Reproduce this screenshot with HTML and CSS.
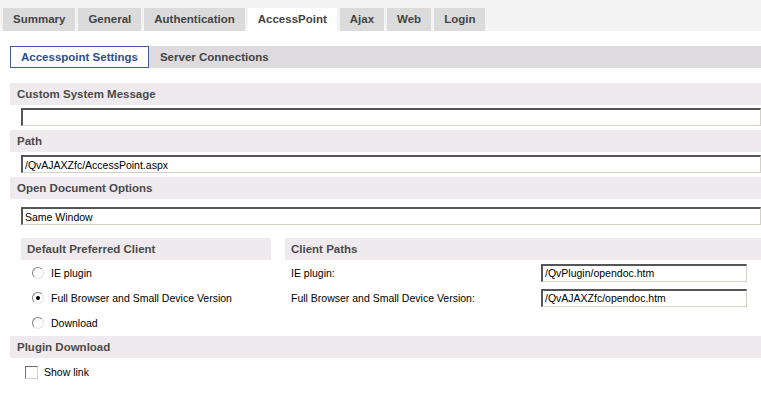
FILE: index.html
```html
<!DOCTYPE html>
<html lang="en">
<head>
    <meta charset="UTF-8">
    <meta name="viewport" content="width=device-width, initial-scale=1.0">
    <title>AccessPoint Settings</title>
    <link rel="stylesheet" href="styles.css">
</head>
<body>
    <div class="tabstrip">
        <div class="tab">Summary</div>
        <div class="tab">General</div>
        <div class="tab">Authentication</div>
        <div class="tab active">AccessPoint</div>
        <div class="tab">Ajax</div>
        <div class="tab">Web</div>
        <div class="tab">Login</div>
    </div>

    <div class="page">
        <div class="subtabs">
            <div class="subtab active">Accesspoint Settings</div>
            <div class="subtab">Server Connections</div>
        </div>

        <div class="section-head">Custom System Message</div>
        <div class="field"><input type="text" class="text-input" value=""></div>

        <div class="section-head">Path</div>
        <div class="field"><input type="text" class="text-input" value="/QvAJAXZfc/AccessPoint.aspx"></div>

        <div class="section-head">Open Document Options</div>
        <div class="field field-select"><input type="text" class="text-input" value="Same Window"></div>

        <div class="columns">
            <div class="col-left">
                <div class="section-head">Default Preferred Client</div>
                <label class="option"><input type="radio" name="client"> IE plugin</label>
                <label class="option"><input type="radio" name="client" checked> Full Browser and Small Device Version</label>
                <label class="option"><input type="radio" name="client"> Download</label>
            </div>
            <div class="col-right">
                <div class="section-head">Client Paths</div>
                <div class="path-row">
                    <span class="path-label">IE plugin:</span>
                    <input type="text" class="text-input path-input" value="/QvPlugin/opendoc.htm">
                </div>
                <div class="path-row">
                    <span class="path-label">Full Browser and Small Device Version:</span>
                    <input type="text" class="text-input path-input" value="/QvAJAXZfc/opendoc.htm">
                </div>
            </div>
        </div>

        <div class="section-head plugin-head">Plugin Download</div>
        <label class="option check-row"><input type="checkbox"> Show link</label>
    </div>
</body>
</html>
```

FILE: styles.css
```css
body {
    margin: 0;
    font-family: "Liberation Sans", Arial, sans-serif;
    font-size: 10.5px;
    color: #000;
    background-color: #fff;
    overflow: hidden;
}
.tabstrip {
    display: flex;
    gap: 3px;
    padding: 8px 0 0 3px;
    background-color: #f4f4f4;
}
.tab {
    height: 23px;
    line-height: 23px;
    padding: 0 10px;
    background-color: #dcdbdc;
    color: #444;
    font-weight: bold;
    font-size: 11.5px;
}
.tab.active {
    background-color: #fff;
}
.page {
    padding-left: 10px;
    overflow: hidden;
}
.subtabs {
    display: flex;
    height: 22px;
    margin-top: 15px;
    background-color: #dddbde;
}
.subtab {
    line-height: 20px;
    padding: 0 10px;
    font-weight: bold;
    font-size: 11.5px;
    color: #444;
    border: 1px solid transparent;
}
.subtab.active {
    background-color: #fff;
    border-color: #3f5b9c;
    color: #2f4d94;
}
.section-head {
    height: 22px;
    line-height: 22px;
    margin-top: 4px;
    padding-left: 7px;
    background-color: #efeaed;
    color: #4a4a4a;
    font-weight: bold;
    font-size: 11.5px;
}
.subtabs + .section-head {
    margin-top: 15px;
}
.field {
    margin: 3px 0 0 11px;
}
.field-select {
    margin-top: 8px;
}
.text-input {
    display: block;
    box-sizing: border-box;
    width: 100%;
    height: 18px;
    margin: 0;
    padding: 0 2px;
    font-family: "Liberation Sans", Arial, sans-serif;
    font-size: 10.5px;
    color: #000;
    background: #fff;
    border-top: 2px solid #555;
    border-left: 2px solid #555;
    border-right: 1px solid #d4d0c8;
    border-bottom: 1px solid #d4d0c8;
    outline: none;
}
.columns {
    display: flex;
    gap: 14px;
    margin: 13px 0 0 11px;
}
.col-left {
    width: 250px;
    flex-shrink: 0;
}
.col-right {
    flex: 1;
}
.columns .section-head {
    margin-top: 0;
    padding-left: 6px;
}
.option {
    display: flex;
    align-items: center;
    height: 25px;
    padding-left: 11px;
}
.option input {
    appearance: none;
    -webkit-appearance: none;
    box-sizing: border-box;
    width: 12px;
    height: 12px;
    margin: 0 7px 0 0;
    background: #fff;
    border-top: 1px solid #808080;
    border-left: 1px solid #808080;
    border-right: 1px solid #e4e2de;
    border-bottom: 1px solid #e4e2de;
}
.option input[type="radio"] {
    border-radius: 50%;
    position: relative;
}
.option input[type="radio"]:checked::after {
    content: "";
    position: absolute;
    left: 3px;
    top: 3px;
    width: 4px;
    height: 4px;
    border-radius: 50%;
    background: #000;
}
.path-row {
    display: flex;
    align-items: center;
    height: 25px;
}
.path-label {
    width: 250px;
    padding-left: 6px;
}
.path-input {
    width: 206px;
}
.plugin-head {
    margin-top: 1px;
}
.check-row {
    height: 28px;
    padding-left: 15px;
}
.check-row input {
    width: 13px;
    height: 13px;
    margin-right: 6px;
    border-top-color: #707070;
    border-left-color: #707070;
    border-right-color: #d4d0c8;
    border-bottom-color: #d4d0c8;
}
```
